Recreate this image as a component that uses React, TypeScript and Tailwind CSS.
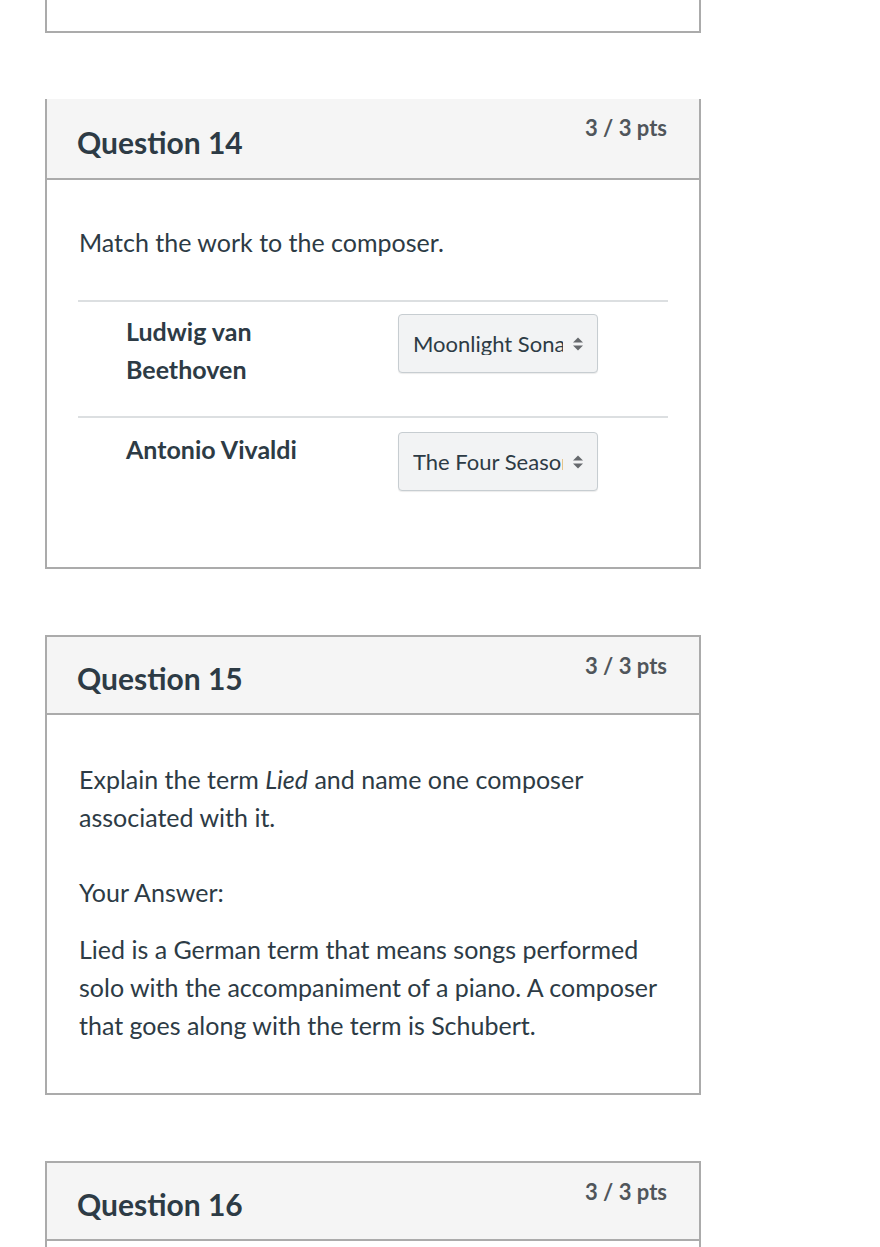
import type { ReactNode } from 'react'

const font = { fontFamily: 'Lato, "Open Sans", sans-serif' }

function SortIcon() {
  return (
    <svg width="12" height="14" viewBox="0 0 12 14" className="shrink-0">
      <path d="M6 0.5 L11 5.5 H1 Z" fill="#66696d" />
      <path d="M6 13.5 L11 8.5 H1 Z" fill="#66696d" />
    </svg>
  )
}

function FakeSelect({ value }: { value: string }) {
  return (
    <div className="flex h-[59px] w-[200px] items-center rounded-[4px] border border-[#c7cdd1] bg-[#f2f3f4] pl-[14px] pr-[13px] shadow-[0_1px_1px_rgba(0,0,0,0.08)]">
      <span className="mr-[9px] flex-1 overflow-hidden whitespace-nowrap text-[22px] leading-none text-[#2d3b45]">{value}</span>
      <SortIcon />
    </div>
  )
}

type CardProps = {
  number: number
  noTop?: boolean
  children?: ReactNode
}

function QuestionCard({ number, noTop, children }: CardProps) {
  return (
    <div className={`border-x-2 border-[#ababab] ${noTop ? '' : 'border-t-2'} ${children ? 'border-b-2' : ''}`}>
      <div className={`flex ${noTop ? 'h-[81px]' : 'h-[78px]'} items-start justify-between border-b-2 border-[#ababab] bg-[#f5f5f5] pl-[30px] pr-[32px]`}>
        <h2 className={`${noTop ? 'pt-[25px]' : 'pt-[23px]'} text-[30px] font-bold leading-[36px] text-[#2d3b45]`}>Question {number}</h2>
        <span className="pt-[15px] text-[22px] font-bold leading-[28px] text-[#50565b]">3 / 3 pts</span>
      </div>
      {children}
    </div>
  )
}

function MatchRow({ name, value, className }: { name: ReactNode; value: string; className: string }) {
  return (
    <div className={`flex border-t-2 border-[#dcdfe1] ${className}`}>
      <div className="w-[320px] pl-[48px] pr-[60px]">
        <div className="text-[25px] font-bold leading-[38px] text-[#2d3b45]">{name}</div>
      </div>
      <div>
        <FakeSelect value={value} />
      </div>
    </div>
  )
}

export default function App() {
  return (
    <div className="min-h-screen bg-white" style={font}>
      <div className="ml-[45px] w-[656px]">
        <div className="h-[33px] border-x-2 border-b-2 border-[#ababab] bg-white" />

        <div className="mt-[66px]">
          <QuestionCard number={14} noTop>
            <div className="bg-white px-[31px] pb-[76px] pt-[43px]">
              <p className="pl-[1px] text-[25px] leading-[38px] text-[#2d3b45]">Match the work to the composer.</p>
              <div className="mt-[39px]">
                <MatchRow name={<>Ludwig van<br />Beethoven</>} value="Moonlight Sonata" className="h-[116px] items-start pt-[10px] [&>div:last-child]:pt-[2px]" />
                <MatchRow name="Antonio Vivaldi" value="The Four Seasons" className="items-start pt-[12px] [&>div:last-child]:pt-[2px]" />
              </div>
            </div>
          </QuestionCard>
        </div>

        <div className="mt-[66px]">
          <QuestionCard number={15}>
            <div className="bg-white px-[32px] pb-[49px] pt-[45px] text-[25px] leading-[38px] text-[#2d3b45]">
              <p>
                Explain the term <em>Lied</em> and name one composer associated with it.
              </p>
              <p className="mt-[37px]">Your Answer:</p>
              <p className="mt-[19px]">
                Lied is a German term that means songs performed solo with the accompaniment of a piano. A composer that goes along with the term is Schubert.
              </p>
            </div>
          </QuestionCard>
        </div>

        <div className="mt-[66px]">
          <QuestionCard number={16}>
            <div className="h-[20px] bg-white" />
          </QuestionCard>
        </div>
      </div>
    </div>
  )
}
